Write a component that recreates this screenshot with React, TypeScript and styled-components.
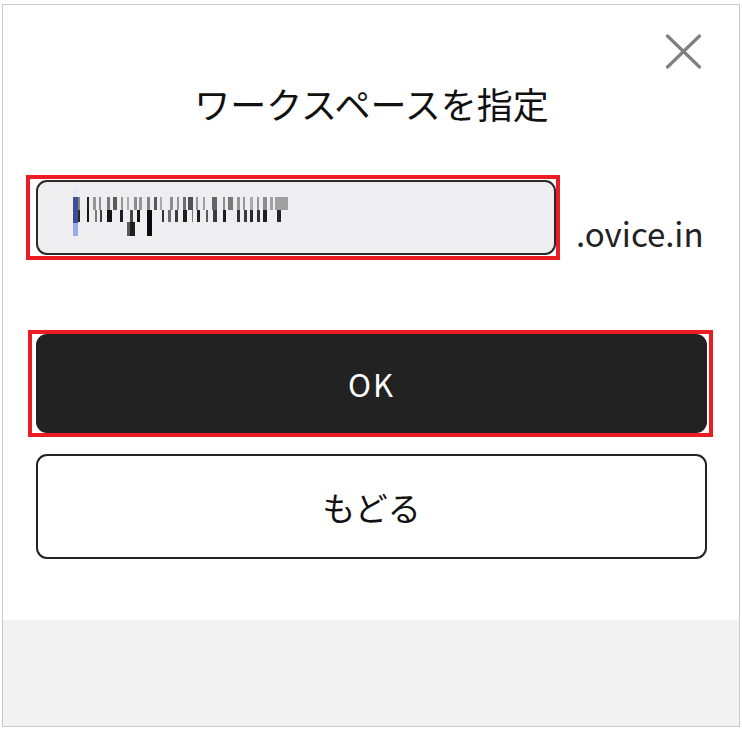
import React from 'react';
import styled, { createGlobalStyle } from 'styled-components';

const GlobalStyle = createGlobalStyle`
  html, body {
    margin: 0;
    padding: 0;
    background: #ffffff;
  }
  body {
    font-family: "Noto Sans CJK JP", "Noto Sans", sans-serif;
    color: #111111;
  }
`;

/** Outer frame of the dialog */
const Frame = styled.div`
  box-sizing: border-box;
  margin: 4px 0 0 2px;
  width: 738px;
  height: 723px;
  border: 1px solid #c8c8c8;
  display: flex;
  flex-direction: column;
  background: #ffffff;
`;

const Body = styled.div`
  display: flex;
  flex-direction: column;
  padding: 0 32px 61px 33px;
`;

const CloseRow = styled.div`
  display: flex;
  justify-content: flex-end;
  padding-top: 28px;
`;

const CloseButton = styled.button`
  border: none;
  background: none;
  padding: 0;
  margin-right: 6px;
  width: 36px;
  height: 36px;
  cursor: pointer;
  color: #808080;
  display: flex;
`;

const Title = styled.h1`
  margin: 16px 0 0;
  font-size: 36px;
  line-height: 1;
  font-weight: 400;
  text-align: center;
  color: #111111;
`;

const FieldRow = styled.div`
  display: flex;
  align-items: flex-end;
  gap: 20px;
  margin-top: 59px;
`;

/** Red annotation box drawn over a part of the screen */
const Highlight = styled.div<{ $inset: string }>`
  position: relative;

  &::after {
    content: "";
    position: absolute;
    inset: ${p => p.$inset};
    border: 4.5px solid #ec1c24;
    pointer-events: none;
  }
`;

const Field = styled.div`
  box-sizing: border-box;
  width: 520px;
  height: 75px;
  border: 2px solid #2a2a2a;
  border-radius: 11px;
  background: #eeeef0;
  padding: 4px 0 0 34px;
  display: flex;
  align-items: flex-start;
`;

const Suffix = styled.span`
  font-size: 33px;
  line-height: 1;
  margin-bottom: 5px;
  color: #222222;
`;

const Button = styled.button<{ $primary?: boolean }>`
  box-sizing: border-box;
  width: 100%;
  height: ${p => (p.$primary ? '99px' : '105px')};
  border-radius: 11px;
  border: ${p => (p.$primary ? 'none' : '2px solid #222222')};
  background: ${p => (p.$primary ? '#222222' : '#ffffff')};
  color: ${p => (p.$primary ? '#ffffff' : '#111111')};
  font-family: "Noto Sans CJK JP", "Noto Sans", sans-serif;
  font-size: ${p => (p.$primary ? '31px' : '33px')};
  letter-spacing: ${p => (p.$primary ? '2px' : '0')};
  font-weight: 400;
  cursor: pointer;
  display: flex;
  align-items: center;
  justify-content: center;
`;

const PrimaryWrap = styled(Highlight)`
  margin-top: 79px;
`;

const BackWrap = styled.div`
  margin-top: 21px;
`;

const Footer = styled.div`
  flex: 1;
  background: #f2f2f2;
`;

// redacted value: blocks of the mosaic [x0, x1, row, grey]
const blocks: [number, number, number, number][] = [
  [78, 80, 0, 130], [87, 89, 0, 30], [93, 96, 0, 150], [99, 101, 0, 140],
  [107, 110, 0, 120], [113, 117, 0, 90], [121, 123, 0, 150], [127, 129, 0, 170],
  [134, 137, 0, 140], [139, 142, 0, 150], [147, 150, 0, 130], [154, 157, 0, 90],
  [160, 162, 0, 170], [170, 173, 0, 140], [177, 179, 0, 150], [183, 186, 0, 110],
  [188, 193, 0, 80], [196, 198, 0, 150], [203, 205, 0, 160], [212, 217, 0, 100],
  [223, 225, 0, 140], [228, 233, 0, 120], [237, 240, 0, 150], [243, 245, 0, 150],
  [250, 253, 0, 170], [257, 259, 0, 150], [263, 267, 0, 140], [270, 273, 0, 160],
  [275, 288, 0, 160],
  [78, 80, 1, 40], [87, 89, 1, 20], [95, 97, 1, 120], [100, 102, 1, 60],
  [107, 112, 1, 20], [120, 123, 1, 30], [130, 133, 1, 70], [137, 140, 1, 20],
  [147, 152, 1, 10], [162, 164, 1, 50], [168, 171, 1, 110], [175, 178, 1, 60],
  [183, 187, 1, 30], [192, 193, 1, 120], [197, 200, 1, 30], [206, 208, 1, 90],
  [213, 217, 1, 60], [223, 226, 1, 30], [237, 240, 1, 50], [244, 247, 1, 60],
  [250, 253, 1, 40], [257, 260, 1, 50], [263, 267, 1, 30], [277, 281, 1, 40],
  [127, 130, 2, 90], [130, 135, 2, 30], [147, 152, 2, 10],
];

const rowY = [197, 210, 222];
const rowH = [13, 12, 14];

const Mosaic: React.FC = () => (
  <svg width="218" height="51" viewBox="72 186 218 51" aria-hidden="true">
    <rect x="73" y="187" width="5" height="10" fill="#e4e8f8" />
    <rect x="73" y="197" width="5" height="26" fill="#3c4e96" />
    <rect x="73" y="223" width="5" height="13" fill="#9aaae6" />
    {blocks.map(([x0, x1, row, g], i) => (
      <rect
        key={i}
        x={x0}
        y={rowY[row]}
        width={x1 - x0}
        height={rowH[row]}
        fill={`rgb(${g},${g},${g})`}
      />
    ))}
  </svg>
);

const CloseIcon: React.FC = () => (
  <svg width="36" height="36" viewBox="0 0 36 36" fill="none" stroke="currentColor" strokeWidth="3.2" strokeLinecap="round">
    <path d="M2.5 3 L34.5 34" />
    <path d="M34.5 3 L2.5 34" />
  </svg>
);

export default function App() {
  return (
    <>
      <GlobalStyle />
      <Frame>
        <Body>
          <CloseRow>
            <CloseButton aria-label="閉じる">
              <CloseIcon />
            </CloseButton>
          </CloseRow>
          <Title>ワークスペースを指定</Title>
          <FieldRow>
            <Highlight $inset="-5px -4px -5px -10px">
              <Field role="textbox">
                <Mosaic />
              </Field>
            </Highlight>
            <Suffix>.ovice.in</Suffix>
          </FieldRow>
          <PrimaryWrap $inset="-4px -6px -4px -8px">
            <Button $primary>OK</Button>
          </PrimaryWrap>
          <BackWrap>
            <Button>もどる</Button>
          </BackWrap>
        </Body>
        <Footer />
      </Frame>
    </>
  );
}
